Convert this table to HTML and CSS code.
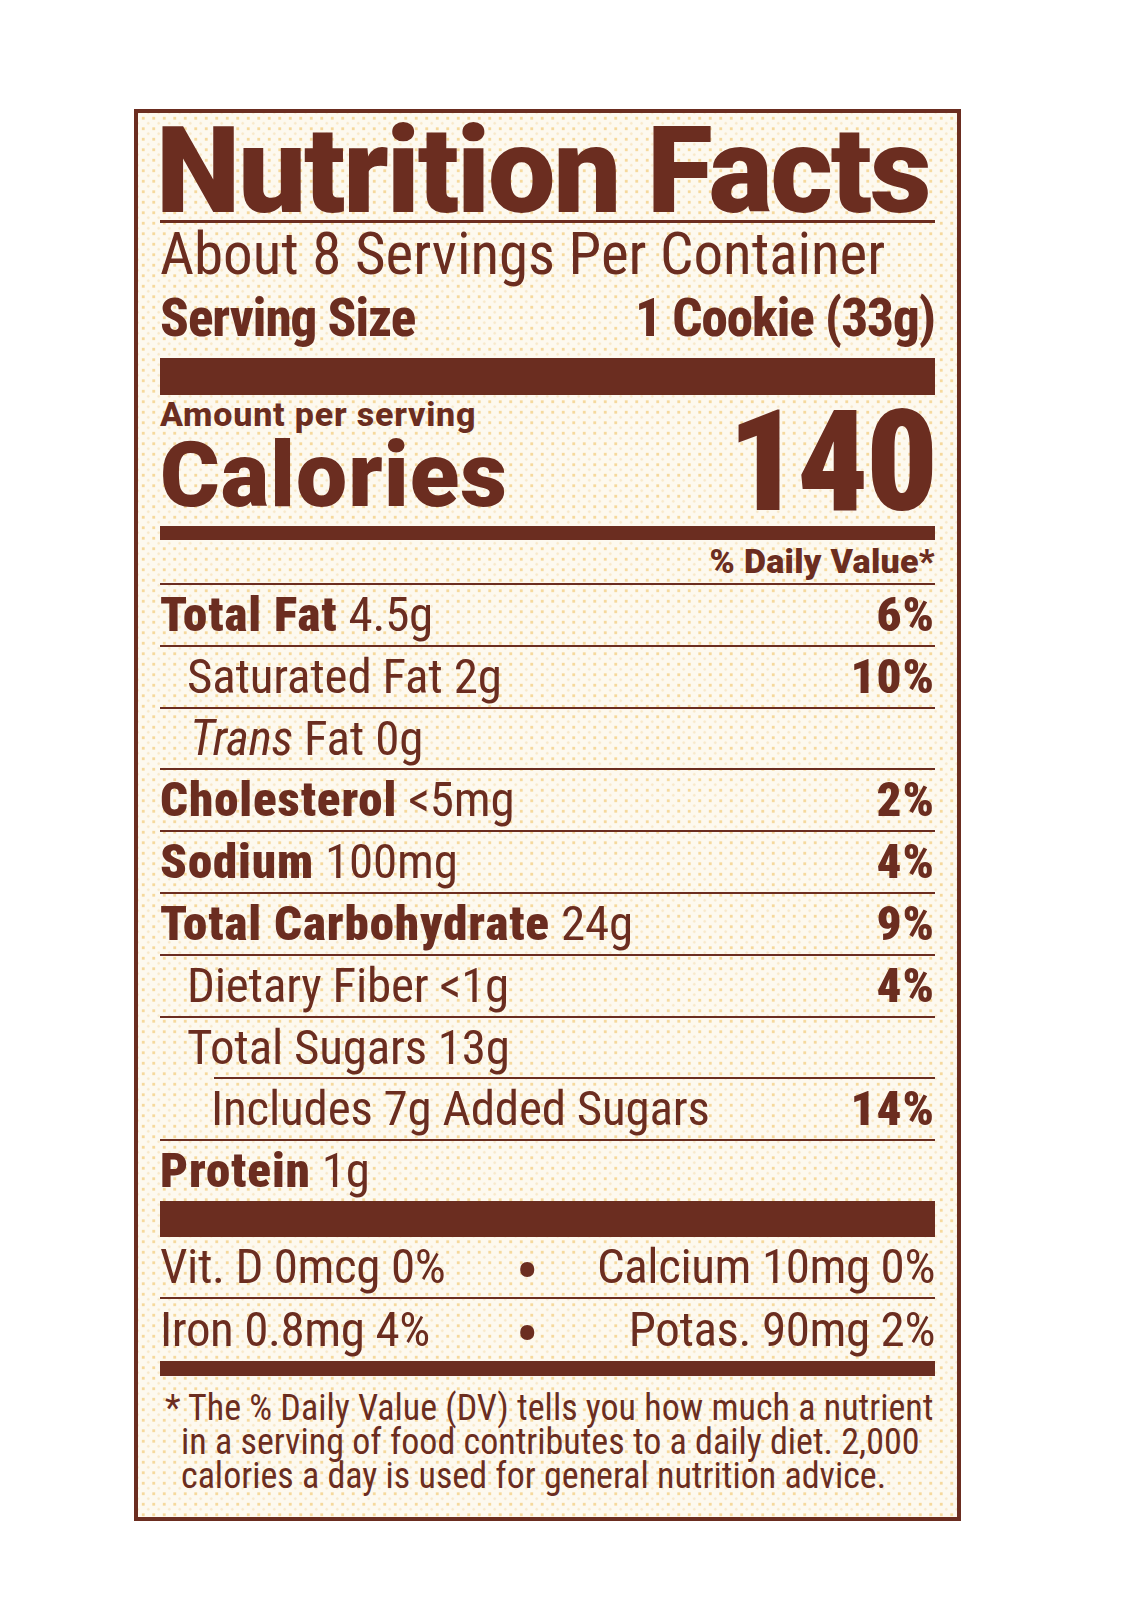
FILE: index.html
```html
<!DOCTYPE html>
<html lang="en">
<head>
<meta charset="utf-8">
<title>Nutrition Facts</title>
<link rel="stylesheet" href="styles.css">
</head>
<body>
<div class="label">
  <div class="title">Nutrition Facts</div>
  <div class="servings">About 8 Servings Per Container</div>
  <div class="serving-size"><span>Serving Size</span><span>1 Cookie (33g)</span></div>
  <div class="bar bar-lg"></div>
  <div class="calories">
    <div class="cal-left">
      <div class="amount">Amount per serving</div>
      <div class="cal-word">Calories</div>
    </div>
    <div class="cal-num">140</div>
  </div>
  <div class="bar bar-md"></div>
  <div class="dv-head">% Daily Value*</div>
  <div class="row"><span><b>Total Fat</b> 4.5g</span><b class="pct">6%</b></div>
  <div class="row i1"><span>Saturated Fat 2g</span><b class="pct">10%</b></div>
  <div class="row i1t"><span><i>Trans</i> Fat 0g</span></div>
  <div class="row"><span><b>Cholesterol</b> &lt;5mg</span><b class="pct">2%</b></div>
  <div class="row"><span><b>Sodium</b> 100mg</span><b class="pct">4%</b></div>
  <div class="row"><span><b>Total Carbohydrate</b> 24g</span><b class="pct">9%</b></div>
  <div class="row i1"><span>Dietary Fiber &lt;1g</span><b class="pct">4%</b></div>
  <div class="row i1 no-rule"><span>Total Sugars 13g</span></div>
  <div class="rule-indent"></div>
  <div class="row i2"><span>Includes 7g Added Sugars</span><b class="pct">14%</b></div>
  <div class="row no-rule"><span><b>Protein</b> 1g</span></div>
  <div class="bar bar-lg2"></div>
  <div class="mrow first"><span>Vit. D 0mcg 0%</span><span class="dot">•</span><span class="r">Calcium 10mg 0%</span></div>
  <div class="mrow"><span>Iron 0.8mg 4%</span><span class="dot">•</span><span class="r">Potas. 90mg 2%</span></div>
  <div class="bar bar-sm"></div>
  <p class="foot">* The % Daily Value (DV) tells you how much a nutrient<br>in a serving of food contributes to a daily diet. 2,000<br>calories a day is used for general nutrition advice.</p>
</div>
</body>
</html>
```
FILE: styles.css
```css
body {
  margin: 0;
  background: #ffffff;
}

.label {
  box-sizing: border-box;
  width: 827px;
  margin: 109px 0 0 134px;
  border: 4px solid #6b2d20;
  padding: 10px 22px 24px 22px;
  color: #6b2d20;
  background-color: #fdf9ef;
  background-image:
    radial-gradient(circle at 50% 50%, rgba(243, 208, 135, 0.8) 1.3px, transparent 1.9px),
    radial-gradient(circle at 50% 50%, rgba(243, 215, 160, 0.5) 1px, transparent 1.5px);
  background-size: 10.5px 10.5px, 10.5px 10.5px;
  background-position: 0 0, 5px 5px;
  font-family: "Roboto", "Roboto Condensed", sans-serif;
  font-stretch: 75%;
}

.title {
  font-family: "Roboto", "Liberation Sans", sans-serif;
  font-stretch: 100%;
  font-weight: 900;
  font-size: 120px;
  line-height: 97px;
  letter-spacing: -2px;
  text-indent: -4px;
  white-space: nowrap;
  border-bottom: 3px solid #6b2d20;
}

.servings {
  font-size: 59px;
  line-height: 62px;
  white-space: nowrap;
}

.serving-size {
  display: flex;
  justify-content: space-between;
  font-weight: 800;
  font-size: 53px;
  line-height: 66px;
  letter-spacing: -1px;
  padding-bottom: 7px;
  white-space: nowrap;
}

.bar {
  background: #6b2d20;
}

.bar-lg { height: 37px; }
.bar-md { height: 14px; }
.bar-lg2 { height: 36px; }
.bar-sm { height: 15px; }

.calories {
  display: flex;
  justify-content: space-between;
  align-items: flex-end;
  padding-bottom: 9px;
}

.amount {
  font-stretch: 100%;
  font-weight: 800;
  font-size: 34px;
  line-height: 38px;
  letter-spacing: 0.8px;
  white-space: nowrap;
}

.cal-word {
  font-stretch: 100%;
  font-weight: 900;
  font-size: 91px;
  line-height: 84px;
  letter-spacing: 1px;
}

.cal-num {
  font-weight: 900;
  font-size: 141px;
  line-height: 111px;
  letter-spacing: -3px;
}

.dv-head {
  text-align: right;
  font-stretch: 100%;
  font-weight: 900;
  font-size: 34px;
  line-height: 43px;
  letter-spacing: 0.3px;
  border-bottom: 2px solid #6b2d20;
}

.row {
  display: flex;
  justify-content: space-between;
  font-size: 49px;
  line-height: 59.8px;
  letter-spacing: -0.2px;
  border-bottom: 2px solid #6b2d20;
  white-space: nowrap;
}

.row b {
  font-weight: 900;
  letter-spacing: 0.9px;
}

.row .pct {
  letter-spacing: 1px;
}

.row.i1 { padding-left: 27px; }
.row.i1t { padding-left: 30px; }
.row.i2 { padding-left: 51px; }
.row.no-rule { border-bottom: none; }

.rule-indent {
  height: 2px;
  margin-left: 54px;
  background: #6b2d20;
}

.mrow {
  display: grid;
  grid-template-columns: 345px 44px 1fr;
  font-size: 49px;
  line-height: 62px;
  letter-spacing: -0.4px;
  white-space: nowrap;
}

.mrow.first {
  line-height: 60px;
  border-bottom: 2px solid #6b2d20;
}

.dot {
  text-align: center;
  font-size: 70px;
  padding-top: 4px;
  margin-bottom: -4px;
}

.r {
  text-align: right;
}

.foot {
  margin: 0;
  padding: 15px 0 0 21px;
  text-indent: -16px;
  font-size: 36px;
  line-height: 34px;
  white-space: nowrap;
}
```
